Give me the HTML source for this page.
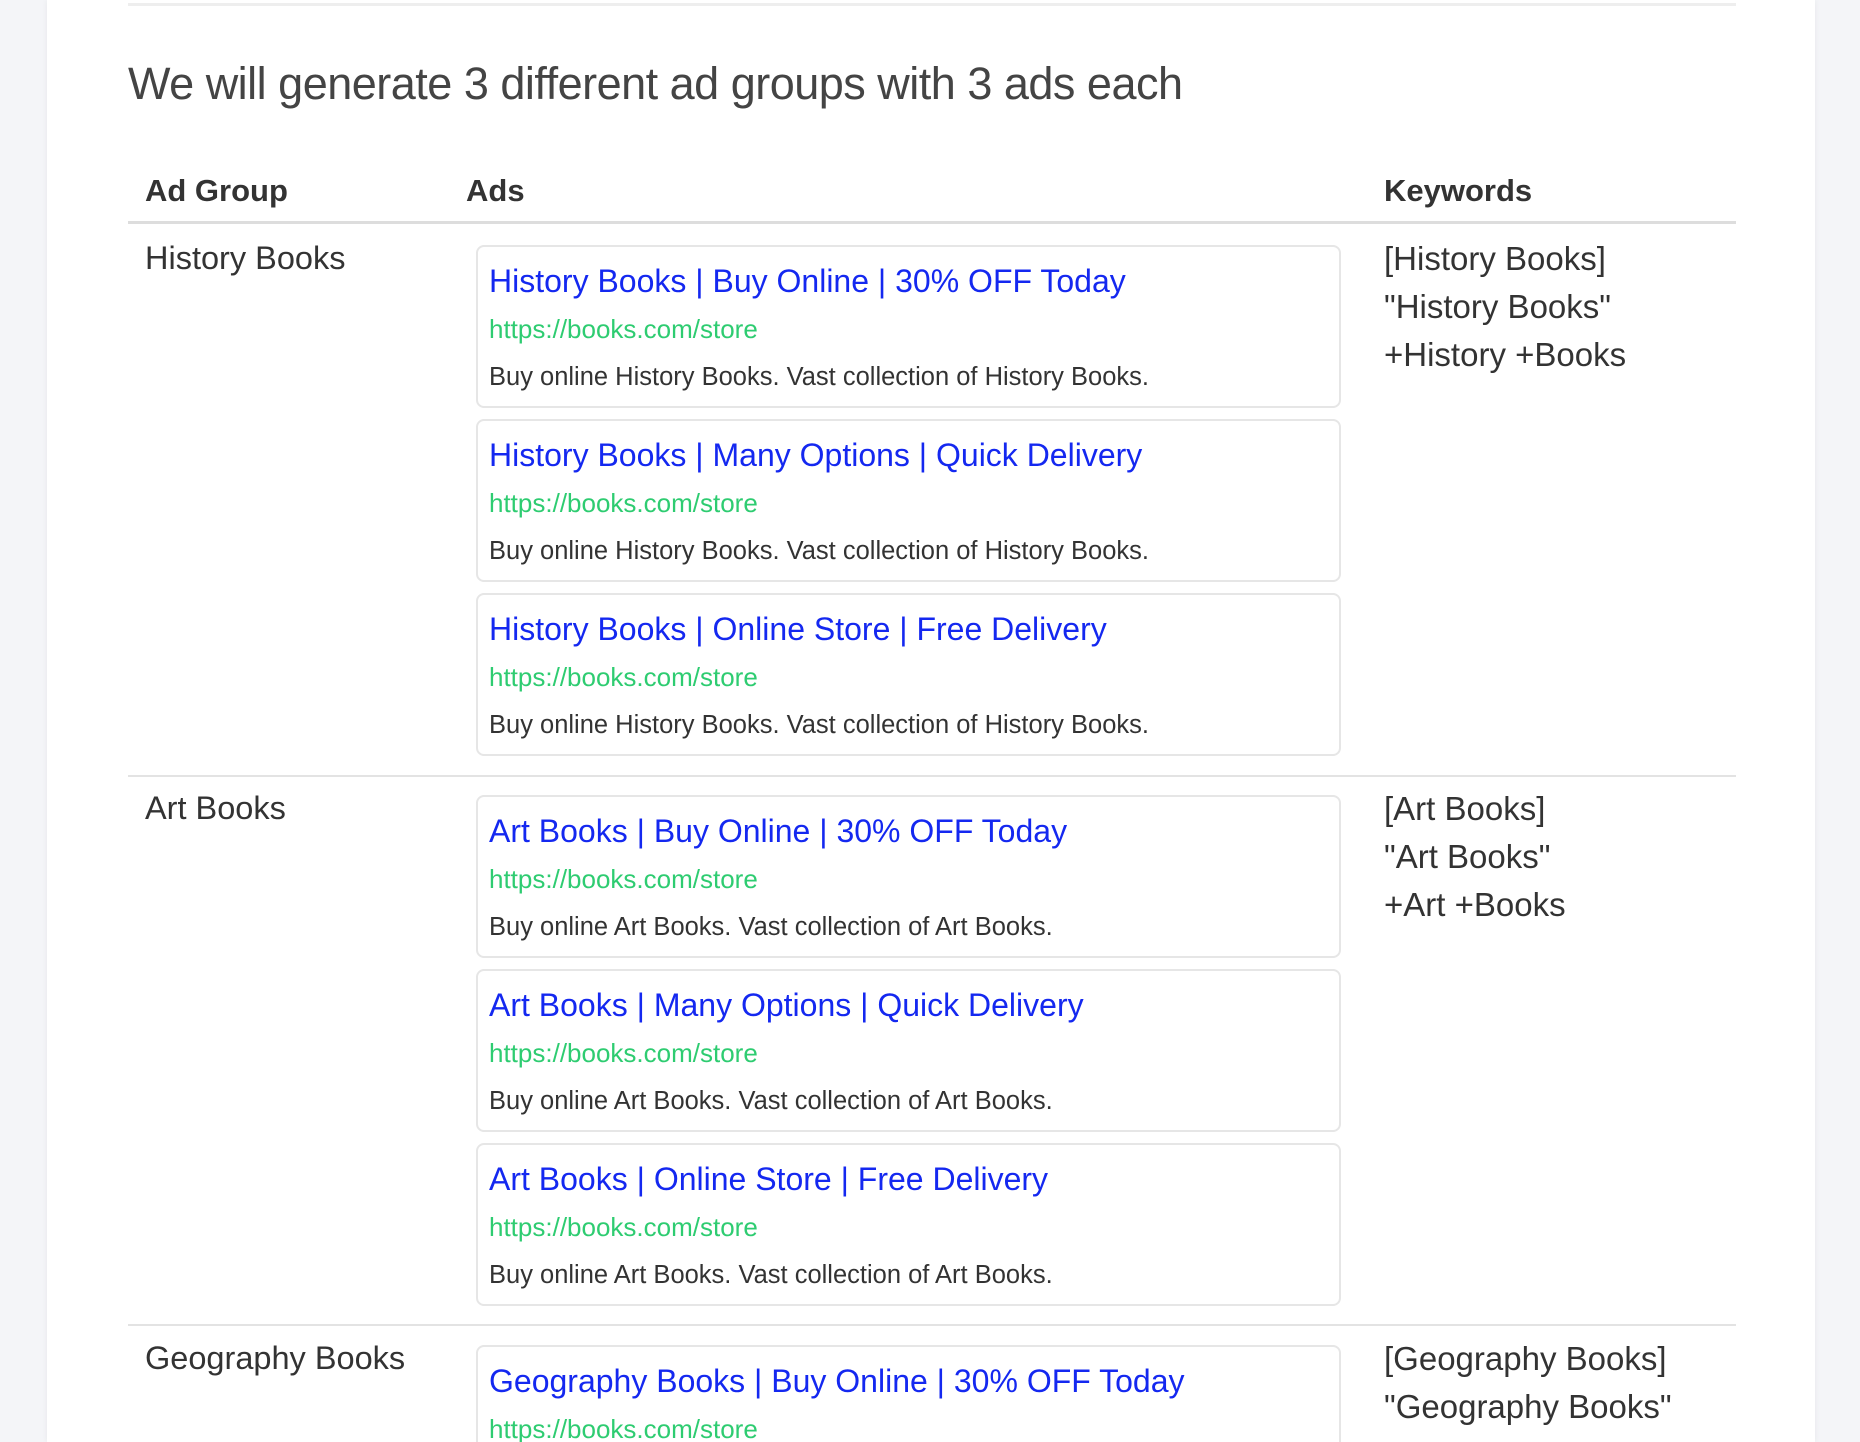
<!DOCTYPE html>
<html><head><meta charset="utf-8"><style>
*{margin:0;padding:0;box-sizing:border-box}
html,body{width:1860px;height:1442px;overflow:hidden}
body{background:#f4f5f8;font-family:"Liberation Sans",sans-serif}
#w{position:relative;width:1860px;height:1442px;overflow:hidden}
.panel{position:absolute;left:47px;top:0;width:1768px;height:1442px;background:#fff;box-shadow:0 0 6px rgba(0,0,0,.06)}
.abs{position:absolute;white-space:nowrap}
.topline{left:128px;top:3px;width:1608px;height:3px;background:#eee}
h1{position:absolute;left:128px;top:58px;font-size:45px;font-weight:400;color:#444;letter-spacing:-.5px;white-space:nowrap}
.th{font-size:31px;font-weight:700;color:#333;top:173px}
.hb{left:128px;top:221px;width:1608px;height:3px;background:#ddd}
.sep{left:128px;width:1608px;height:2px;background:#e3e3e3}
.name{font-size:32.5px;color:#333;left:145px}
.kw{font-size:33px;color:#333;left:1384px;line-height:48px}
.card{position:absolute;left:476px;width:865px;height:163px;border:2px solid #e6e6e6;border-radius:8px}
.card .t{position:absolute;left:11px;top:16px;font-size:32px;color:#1428f0;white-space:nowrap}
.card .u{position:absolute;left:11px;top:67px;font-size:26px;color:#2ecc71;white-space:nowrap}
.card .d{position:absolute;left:11px;top:116px;font-size:25.5px;color:#333;white-space:nowrap}
</style></head><body><div id="w">
<div class="panel"></div>
<div class="abs topline"></div>
<h1>We will generate 3 different ad groups with 3 ads each</h1>
<div class="abs th" style="left:145px">Ad Group</div>
<div class="abs th" style="left:466px">Ads</div>
<div class="abs th" style="left:1384px">Keywords</div>
<div class="abs hb"></div>

<div class="abs name" style="top:240px">History Books</div>
<div class="abs kw" style="top:235px">[History Books]<br>"History Books"<br>+History +Books</div>
<div class="card" style="top:245px"><div class="t">History Books | Buy Online | 30% OFF Today</div><div class="u">https://books.com/store</div><div class="d">Buy online History Books. Vast collection of History Books.</div></div>
<div class="card" style="top:419px"><div class="t">History Books | Many Options | Quick Delivery</div><div class="u">https://books.com/store</div><div class="d">Buy online History Books. Vast collection of History Books.</div></div>
<div class="card" style="top:593px"><div class="t">History Books | Online Store | Free Delivery</div><div class="u">https://books.com/store</div><div class="d">Buy online History Books. Vast collection of History Books.</div></div>
<div class="abs sep" style="top:775px"></div>

<div class="abs name" style="top:790px">Art Books</div>
<div class="abs kw" style="top:785px">[Art Books]<br>"Art Books"<br>+Art +Books</div>
<div class="card" style="top:795px"><div class="t">Art Books | Buy Online | 30% OFF Today</div><div class="u">https://books.com/store</div><div class="d">Buy online Art Books. Vast collection of Art Books.</div></div>
<div class="card" style="top:969px"><div class="t">Art Books | Many Options | Quick Delivery</div><div class="u">https://books.com/store</div><div class="d">Buy online Art Books. Vast collection of Art Books.</div></div>
<div class="card" style="top:1143px"><div class="t">Art Books | Online Store | Free Delivery</div><div class="u">https://books.com/store</div><div class="d">Buy online Art Books. Vast collection of Art Books.</div></div>
<div class="abs sep" style="top:1324px"></div>

<div class="abs name" style="top:1340px">Geography Books</div>
<div class="abs kw" style="top:1335px">[Geography Books]<br>"Geography Books"</div>
<div class="card" style="top:1345px"><div class="t">Geography Books | Buy Online | 30% OFF Today</div><div class="u">https://books.com/store</div><div class="d">Buy online Geography Books. Vast collection of Geography Books.</div></div>
</div></body></html>
